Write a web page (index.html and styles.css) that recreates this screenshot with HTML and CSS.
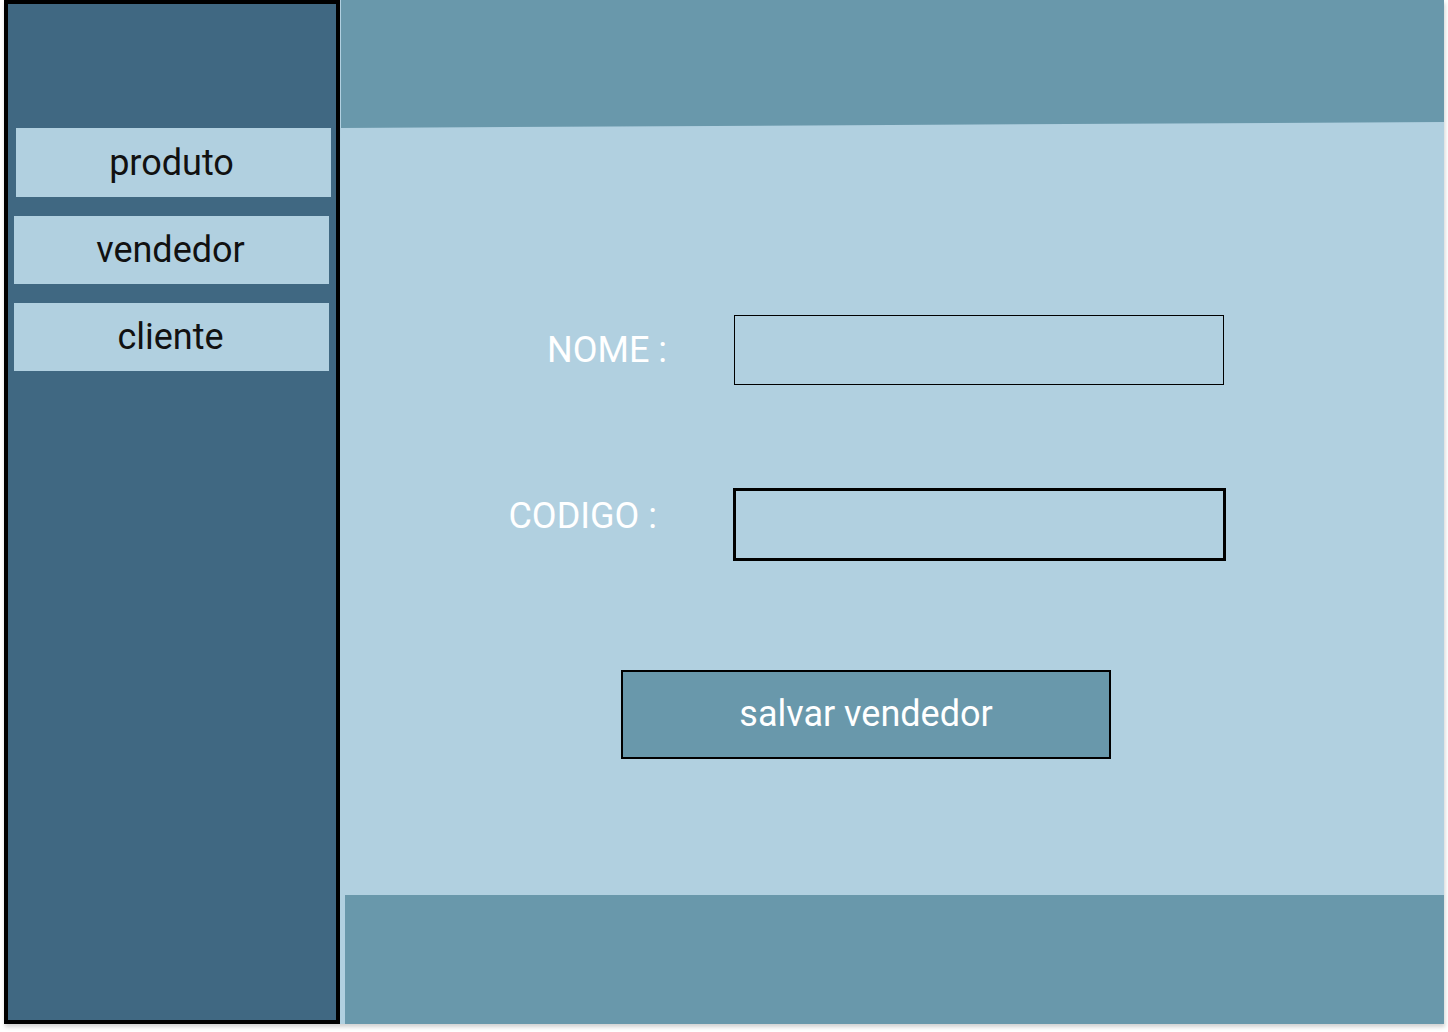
FILE: index.html
```html
<!DOCTYPE html>
<html lang="pt">
<head>
<meta charset="utf-8">
<title>Cadastro de vendedor</title>
<link rel="stylesheet" href="styles.css">
</head>
<body>
<div class="app">
  <aside class="sidebar">
    <nav class="menu">
      <a class="menu-item first">produto</a>
      <a class="menu-item">vendedor</a>
      <a class="menu-item">cliente</a>
    </nav>
  </aside>
  <main class="main">
    <header class="header"></header>
    <section class="content">
      <div class="row row-nome">
        <label class="label label-nome">NOME :</label>
        <div class="field field-nome"></div>
      </div>
      <div class="row row-codigo">
        <label class="label label-codigo">CODIGO :</label>
        <div class="field field-codigo"></div>
      </div>
      <button class="save">salvar vendedor</button>
    </section>
    <footer class="footer"></footer>
  </main>
</div>
</body>
</html>
```
FILE: styles.css
```css
html, body {
  margin: 0;
  padding: 0;
  background: #ffffff;
}
body {
  font-family: Roboto, "Noto Sans", sans-serif;
  width: 1448px;
  height: 1032px;
  overflow: hidden;
}
.app {
  display: flex;
  width: 1440px;
  height: 1024px;
  margin-left: 4px;
  box-shadow: 1px 3px 4px rgba(0, 0, 0, 0.18);
}
.sidebar {
  box-sizing: border-box;
  width: 336px;
  height: 1024px;
  border: 4px solid #000;
  background: #406882;
  flex: none;
}
.menu {
  display: flex;
  flex-direction: column;
  gap: 19px;
  padding-top: 124px;
}
.menu-item {
  display: flex;
  align-items: center;
  justify-content: center;
  width: 315px;
  height: 68px;
  margin-left: 6px;
  padding-right: 2px;
  box-sizing: border-box;
  background: #b1d0e0;
  color: #111;
  font-size: 36px;
  line-height: 1;
}
.menu-item.first {
  margin-left: 8px;
  height: 69px;
  padding-right: 4px;
}
.main {
  flex: 1;
  display: flex;
  flex-direction: column;
  background: #b1d0e0;
}
.header {
  height: 128px;
  margin-left: 1px;
  background: #6998ab;
  clip-path: polygon(0 0, 100% 0, 100% 122px, 0 128px);
  flex: none;
}
.content {
  flex: 1;
  display: flex;
  flex-direction: column;
  padding-top: 187px;
}
.row {
  display: flex;
  align-items: center;
}
.label {
  color: #ffffff;
  font-size: 36px;
  line-height: 1;
  text-align: right;
  flex: none;
}
.label-nome {
  width: 327px;
  margin-right: 67px;
}
.row-codigo {
  margin-top: 103px;
}
.label-codigo {
  width: 317px;
  margin-right: 76px;
  margin-top: -18px;
}
.field {
  box-sizing: border-box;
  flex: none;
}
.field-nome {
  width: 490px;
  height: 70px;
  border: 1px solid #000;
}
.field-codigo {
  width: 493px;
  height: 73px;
  border: 3px solid #000;
}
.save {
  box-sizing: border-box;
  width: 490px;
  height: 89px;
  margin-top: 109px;
  margin-left: 281px;
  border: 2px solid #000;
  background: #6998ab;
  color: #ffffff;
  font-family: Roboto, "Noto Sans", sans-serif;
  font-size: 36px;
  padding: 0 0 2px 0;
}
.footer {
  height: 129px;
  margin-left: 5px;
  background: #6998ab;
  flex: none;
}
```
